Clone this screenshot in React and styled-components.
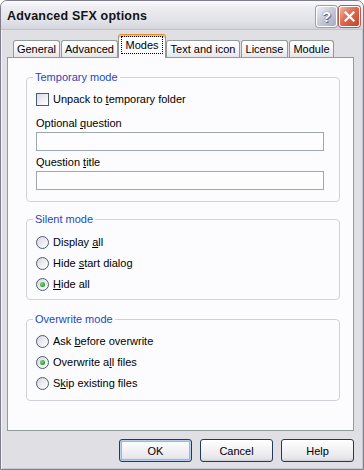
import React from "react";
import styled, { createGlobalStyle } from "styled-components";

const GlobalStyle = createGlobalStyle`
  html, body {
    margin: 0;
    padding: 0;
    background: #ffffff;
  }
  body {
    font-family: "Liberation Sans", Arial, sans-serif;
    font-size: 11px;
    color: #000;
  }
`;

const Window = styled.div`
  width: 364px;
  height: 470px;
  box-sizing: border-box;
  background: #e0dfe3;
  border: 1px solid #7d7d8c;
  border-radius: 7px 7px 0 0;
  box-shadow: inset 1px 0 #f4f4f8, inset -1px 0 #c8c8d2, inset 0 -1px #c8c8d2;
  display: flex;
  flex-direction: column;
  overflow: hidden;
`;

const TitleBar = styled.div`
  height: 28px;
  display: flex;
  align-items: center;
  padding: 0 3px 0 6px;
  background: linear-gradient(#fbfbfd 0%, #ececf1 25%, #e2e2e9 70%, #d4d4dc 100%);
  border-bottom: 1px solid #c2c2cc;
`;

const Title = styled.div`
  flex: 1;
  font-family: "Liberation Sans", Arial, sans-serif;
  font-weight: bold;
  font-size: 12.5px;
  letter-spacing: 0.2px;
  color: #141414;
  padding-top: 1px;
`;

const Controls = styled.div`
  display: flex;
  gap: 2px;
  padding-top: 2px;
`;

const CaptionButton = styled.div`
  width: 21px;
  height: 21px;
  box-sizing: border-box;
  border: 1px solid #ffffff;
  border-radius: 3px;
  display: flex;
  align-items: center;
  justify-content: center;
  background: ${(p) =>
    p.$close
      ? "linear-gradient(135deg, #f0b4a4 0%, #e06a50 45%, #c8402a 100%)"
      : "linear-gradient(135deg, #eef0f6 0%, #c4c8d8 50%, #a8acc2 100%)"};
  box-shadow: 0 0 0 1px ${(p) => (p.$close ? "#b06050" : "#9a9eb2")};
  color: #ffffff;
  font-weight: bold;
  font-size: 15px;
  text-shadow: 0 0 1px #4a4e66, 1px 1px 0 #6a6e86;
`;

const Body = styled.div`
  flex: 1;
  display: flex;
  flex-direction: column;
  padding: 4px 9px 0 6px;
`;

const TabStrip = styled.div`
  height: 23px;
  display: flex;
  align-items: flex-end;
  gap: 1px;
  padding-left: 6px;
`;

const Tab = styled.div`
  box-sizing: border-box;
  width: ${(p) => p.$w}px;
  height: ${(p) => (p.$active ? 24 : 17)}px;
  margin: ${(p) => (p.$active ? "0 -1px -1px -1px" : "0")};
  position: ${(p) => (p.$active ? "relative" : "static")};
  z-index: ${(p) => (p.$active ? 1 : "auto")};
  border: 1px solid #919b9c;
  border-bottom: none;
  border-top-color: ${(p) => (p.$active ? "#e68b2c" : "#919b9c")};
  border-radius: 3px 3px 0 0;
  background: ${(p) =>
    p.$active ? "#fcfcfe" : "linear-gradient(#ffffff 0%, #f4f4f6 60%, #e6e6ea 100%)"};
  box-shadow: ${(p) => (p.$active ? "inset 0 2px #ffc73c" : "none")};
  display: flex;
  align-items: center;
  justify-content: center;
  padding-bottom: ${(p) => (p.$active ? 4 : 0)}px;
  white-space: nowrap;
`;

const Focus = styled.span`
  outline: 1px dotted #000;
  outline-offset: 2px;
  padding: 0 1px;
`;

const Panel = styled.div`
  height: 374px;
  box-sizing: border-box;
  border: 1px solid #919b9c;
  background: #fcfcfe;
  padding: 13px 13px 0 18px;
  display: flex;
  flex-direction: column;
`;

const Group = styled.fieldset`
  margin: ${(p) => p.$mt || 0}px 0 0 0;
  padding: 0 15px ${(p) => p.$pb}px 9px;
  border: 1px solid #d0d0d8;
  border-radius: 4px;
  display: flex;
  flex-direction: column;
  min-width: 0;
`;

const Legend = styled.legend`
  color: #1d48b8;
  padding: 0 2px;
  margin-left: -3px;
  line-height: 13px;
`;

const Row = styled.label`
  display: flex;
  align-items: center;
  height: 13px;
  line-height: 13px;
  margin-top: ${(p) => p.$mt}px;
  white-space: nowrap;
`;

const RowText = styled.span`
  white-space: pre;
`;

const Check = styled.span`
  width: 13px;
  height: 13px;
  box-sizing: border-box;
  border: 1px solid #4b5a78;
  background: linear-gradient(135deg, #dcdce4 0%, #f2f2f5 60%, #ffffff 100%);
  margin-right: 4px;
  flex: none;
`;

const Radio = styled.span`
  width: 13px;
  height: 13px;
  box-sizing: border-box;
  border-radius: 50%;
  border: 1px solid #4b5a78;
  background: linear-gradient(135deg, #d6d6de 0%, #f0f0f3 60%, #ffffff 100%);
  margin-right: 4px;
  flex: none;
  display: flex;
  align-items: center;
  justify-content: center;
  &::after {
    content: "";
    display: ${(p) => (p.$on ? "block" : "none")};
    width: 5px;
    height: 5px;
    border-radius: 50%;
    background: radial-gradient(circle at 35% 35%, #7ee07e 0%, #2fae2f 55%, #1b861b 100%);
  }
`;

const FieldLabel = styled.div`
  line-height: 13px;
  margin-top: ${(p) => p.$mt}px;
`;

const Input = styled.div`
  height: 19px;
  box-sizing: border-box;
  margin-top: 2px;
  border: 1px solid #a1a7b2;
  background: #fdfdfe;
`;

const Key = styled.span`
  text-decoration: underline;
`;

const ButtonRow = styled.div`
  display: flex;
  justify-content: flex-end;
  gap: 8px;
  margin-top: 8px;
`;

const Button = styled.div`
  width: 73px;
  height: 23px;
  box-sizing: border-box;
  border: 1px solid #26395c;
  border-radius: 3px;
  background: linear-gradient(#ffffff 0%, #f3f3f6 45%, #e6e6ec 85%, #d6d6de 100%);
  box-shadow: ${(p) =>
    p.$default ? "inset 0 0 0 1px #b8cdf0, inset 0 0 0 2px #9ab6e6" : "inset 0 -1px #cfcfd8"};
  display: flex;
  align-items: center;
  justify-content: center;
`;

const tabs = [
  { name: "General", w: 47 },
  { name: "Advanced", w: 57 },
  { name: "Modes", w: 48, active: true },
  { name: "Text and icon", w: 74 },
  { name: "License", w: 47 },
  { name: "Module", w: 45 },
];

export default function App() {
  return (
    <>
      <GlobalStyle />
      <Window>
        <TitleBar>
          <Title>Advanced SFX options</Title>
          <Controls>
            <CaptionButton>?</CaptionButton>
            <CaptionButton $close>
              <svg width="11" height="11" viewBox="0 0 11 11">
                <path d="M1.5 1.5 L9.5 9.5 M9.5 1.5 L1.5 9.5" stroke="#ffffff" strokeWidth="2.2" strokeLinecap="square" />
              </svg>
            </CaptionButton>
          </Controls>
        </TitleBar>
        <Body>
          <TabStrip>
            {tabs.map((t) => (
              <Tab key={t.name} $w={t.w} $active={t.active}>
                {t.active ? <Focus>{t.name}</Focus> : t.name}
              </Tab>
            ))}
          </TabStrip>
          <Panel>
            <Group $pb={11}>
              <Legend>Temporary mode</Legend>
              <Row $mt={9}>
                <Check />
                <RowText>
                  Unpack to <Key>t</Key>emporary folder
                </RowText>
              </Row>
              <FieldLabel $mt={11}>
                Optional <Key>q</Key>uestion
              </FieldLabel>
              <Input />
              <FieldLabel $mt={5}>
                Question <Key>t</Key>itle
              </FieldLabel>
              <Input />
            </Group>

            <Group $mt={11} $pb={8}>
              <Legend>Silent mode</Legend>
              <Row $mt={10}>
                <Radio />
                <RowText>
                  Display <Key>a</Key>ll
                </RowText>
              </Row>
              <Row $mt={8}>
                <Radio />
                <RowText>
                  Hide <Key>s</Key>tart dialog
                </RowText>
              </Row>
              <Row $mt={8}>
                <Radio $on />
                <RowText>
                  <Key>H</Key>ide all
                </RowText>
              </Row>
            </Group>

            <Group $mt={13} $pb={10}>
              <Legend>Overwrite mode</Legend>
              <Row $mt={9}>
                <Radio />
                <RowText>
                  Ask <Key>b</Key>efore overwrite
                </RowText>
              </Row>
              <Row $mt={8}>
                <Radio $on />
                <RowText>
                  Overwrite a<Key>l</Key>l files
                </RowText>
              </Row>
              <Row $mt={8}>
                <Radio />
                <RowText>
                  S<Key>k</Key>ip existing files
                </RowText>
              </Row>
            </Group>
          </Panel>
          <ButtonRow>
            <Button $default>OK</Button>
            <Button>Cancel</Button>
            <Button>Help</Button>
          </ButtonRow>
        </Body>
      </Window>
    </>
  );
}
